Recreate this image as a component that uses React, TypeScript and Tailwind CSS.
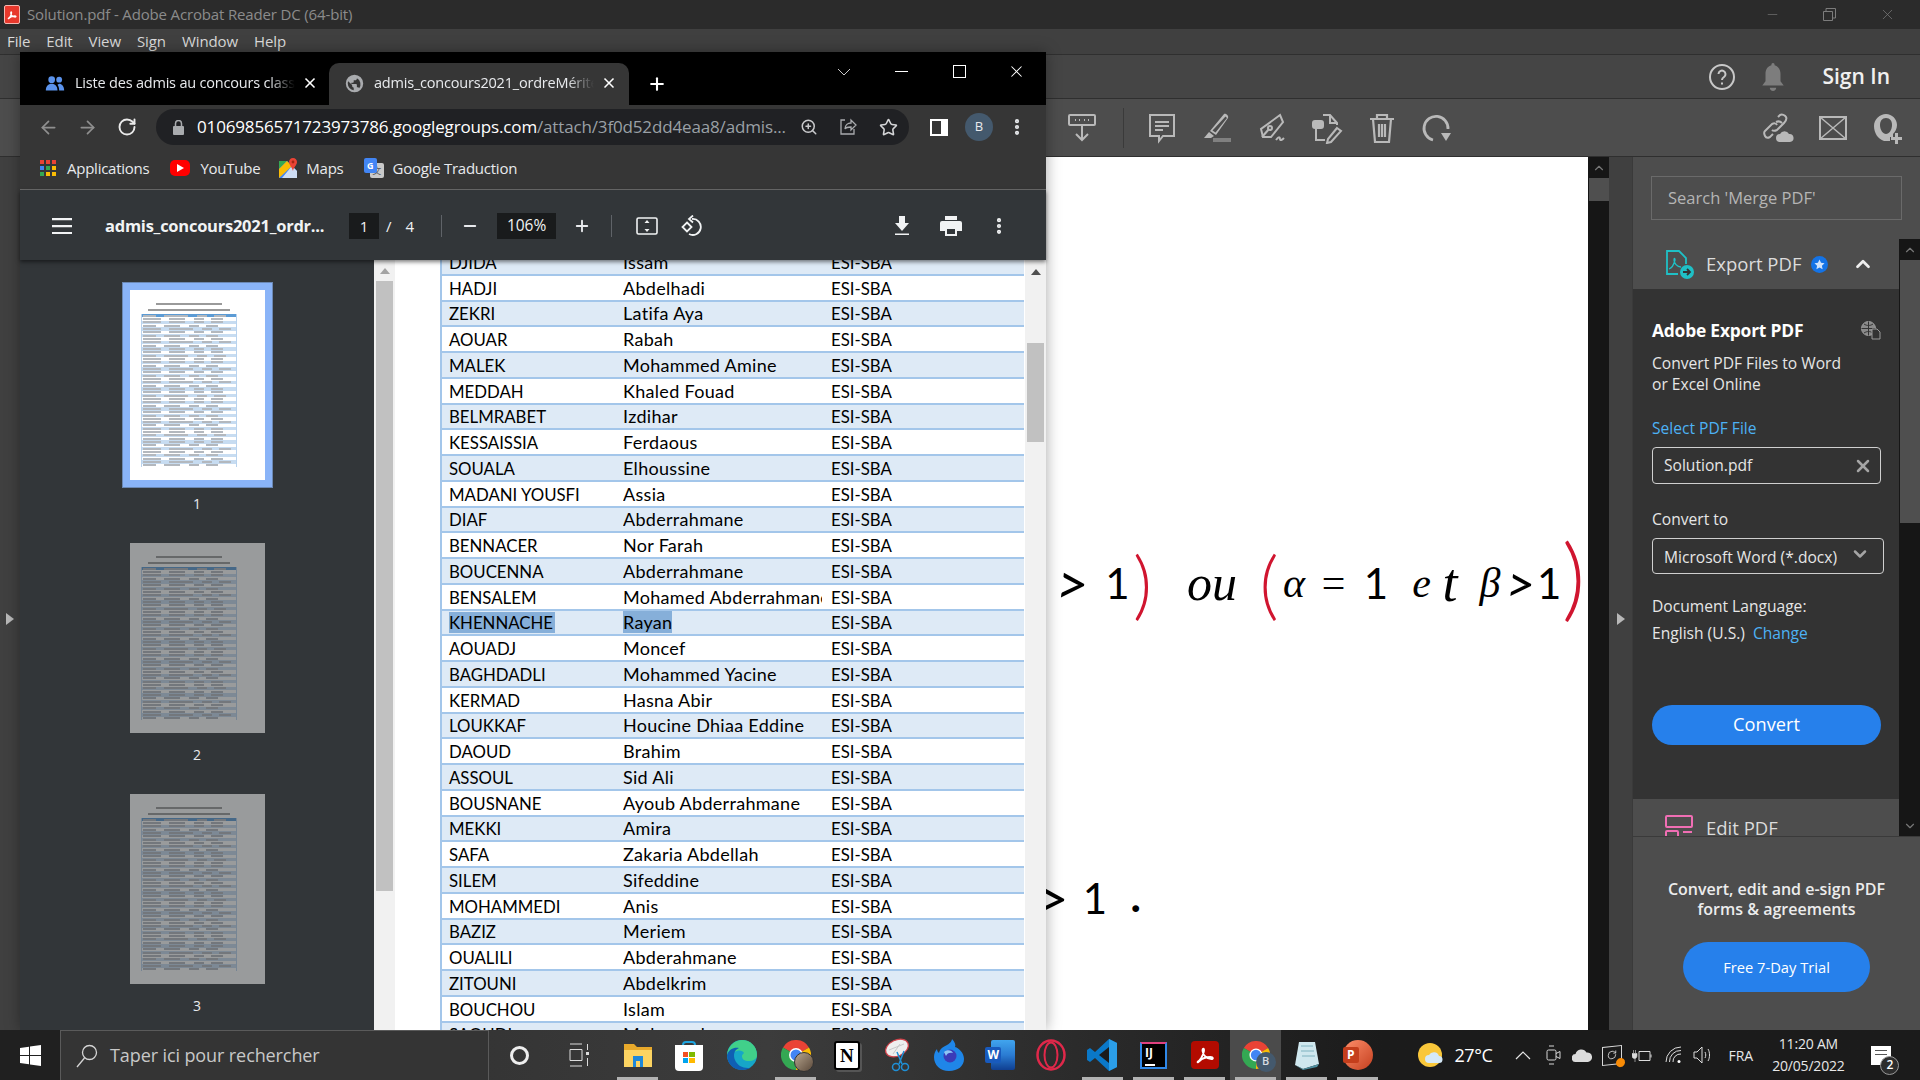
import React from 'react'
import { ArrowLeft, ArrowRight, ChevronDown, ChevronUp, Minus, MoreVertical, Plus, RotateCw, Star, X, ZoomIn } from 'lucide-react'

const rows: [string, string][] = [
    ['DJIDA', 'Issam'], ['HADJI', 'Abdelhadi'], ['ZEKRI', 'Latifa Aya'], ['AOUAR', 'Rabah'], ['MALEK', 'Mohammed Amine'],
    ['MEDDAH', 'Khaled Fouad'], ['BELMRABET', 'Izdihar'], ['KESSAISSIA', 'Ferdaous'], ['SOUALA', 'Elhoussine'],
    ['MADANI YOUSFI', 'Assia'], ['DIAF', 'Abderrahmane'], ['BENNACER', 'Nor Farah'], ['BOUCENNA', 'Abderrahmane'],
    ['BENSALEM', 'Mohamed Abderrahmane'], ['KHENNACHE', 'Rayan'], ['AOUADJ', 'Moncef'], ['BAGHDADLI', 'Mohammed Yacine'],
    ['KERMAD', 'Hasna Abir'], ['LOUKKAF', 'Houcine Dhiaa Eddine'], ['DAOUD', 'Brahim'], ['ASSOUL', 'Sid Ali'],
    ['BOUSNANE', 'Ayoub Abderrahmane'], ['MEKKI', 'Amira'], ['SAFA', 'Zakaria Abdellah'], ['SILEM', 'Sifeddine'],
    ['MOHAMMEDI', 'Anis'], ['BAZIZ', 'Meriem'], ['OUALILI', 'Abderahmane'], ['ZITOUNI', 'Abdelkrim'], ['BOUCHOU', 'Islam'],
    ['SAOUDI', 'Mohamed'], ['HAMDI', 'Imane'],
]

const thumbRows = Array.from({ length: 46 }, (_, i) => i)

const Thumb = ({ dim }: { dim?: boolean }) => (
    <div className={`w-[135px] h-[190px] bg-white flex flex-col items-start pt-[13px] ${dim ? 'opacity-50' : ''}`}>
        <div className="ml-[26px] w-[66px] h-[2px] bg-[#9a9a9a]" />
        <div className="ml-[18px] w-[82px] h-[2px] bg-[#9a9a9a] mt-[4px]" />
        <div className="ml-[11px] w-[96px] mt-[3px] bg-[#b9d3ee] px-[1px] flex flex-col">
            {thumbRows.map((i) => (
                <div key={i} className={`h-[3.33px] flex items-center gap-[3px] px-[1px] ${i === 0 ? 'bg-[#5b9bd5]' : i % 2 ? 'bg-white' : 'bg-[#c7dcf1]'}`}>
                    <div className={`h-[2px] ${i % 3 === 0 ? 'w-[13px]' : 'w-[18px]'} bg-[#b3b8be] mr-[5px]`} />
                    <div className={`h-[2px] ${i % 4 === 0 ? 'w-[24px]' : 'w-[16px]'} bg-[#b3b8be] mr-[6px]`} />
                    <div className="h-[2px] w-[10px] bg-[#b3b8be] mr-[4px]" />
                    <div className="h-[2px] w-[12px] bg-[#b3b8be]" />
                </div>
            ))}
        </div>
    </div>
)

const ChromeLogo = ({ size = 24 }: { size?: number }) => (
    <svg width={size} height={size} viewBox="0 0 24 24">
        <path d="M12 12 1.6 6A12 12 0 0 1 22.4 6Z" fill="#ea4335" />
        <path d="M12 12 22.4 6A12 12 0 0 1 12 24Z" fill="#fbbc04" />
        <path d="M12 12 12 24A12 12 0 0 1 1.6 6Z" fill="#34a853" />
        <circle cx="12" cy="12" r="5.6" fill="#fff" />
        <circle cx="12" cy="12" r="4.4" fill="#4285f4" />
    </svg>
)

const AcrobatGlyph = ({ color = '#fff' }: { color?: string }) => (
    <svg width="24" height="24" viewBox="0 0 24 24" fill="none" stroke={color} strokeWidth="1.8">
        <path d="M4 19c3-1 6-6 7-11 .4-3-1.5-3-1.500 0 .5 4 4 8 9 8 2 0 2-2-1-2-4 0-9 2-11 4-1 1-2 2-2 1Z" />
    </svg>
)

const TaskSlot = ({ children, active, run }: { children: React.ReactNode; active?: boolean; run?: boolean }) => (
    <div className={`relative w-[51.1px] h-[50px] flex items-center justify-center shrink-0 ${active ? 'bg-[#4b4b4b]' : ''}`}>
        {children}
        {run && <div className="absolute bottom-0 left-[5px] right-[5px] h-[3px] bg-[#b2b2b2]" />}
    </div>
)

const ToolSlot = ({ children }: { children: React.ReactNode }) => (
    <div className="w-[55px] h-[36px] flex items-center justify-center">{children}</div>
)

const tool = { width: 32, height: 32, viewBox: '0 0 32 32', fill: 'none', stroke: '#b9b9b9', strokeWidth: 2 }

export default function App() {
    return (
        <div className="relative w-[1920px] h-[1080px] overflow-hidden flex flex-col bg-[#404040] font-['Open_Sans',sans-serif]">
            {/* acrobat title bar */}
            <div className="h-[29px] bg-[#2b2b2b] flex items-center pl-[4px] shrink-0">
                <div className="w-[16px] h-[19px] rounded-[2px] bg-[#e8382c] border border-[#f3b7b0] flex items-center justify-center overflow-hidden">
                    <svg width="12" height="12" viewBox="0 0 24 24" fill="none" stroke="#fff" strokeWidth="2.600">
                        <path d="M4 19c3-1 6-6 7-11 .4-3-1.500-3-1.500 0 .5 4 4 8 9 8 2 0 2-2-1-2-4 0-9 2-11 4-1 1-2 2-2 1Z" />
                    </svg>
                </div>
                <span className="ml-[7px] text-[15px] text-[#8b8b8b] tracking-[-0.15px]">Solution.pdf - Adobe Acrobat Reader DC (64-bit)</span>
                <div className="ml-auto flex items-center text-[#7c7c7c]">
                    <Minus size={15} strokeWidth={1} className="mr-[43px]" />
                    <svg width="13" height="13" viewBox="0 0 13 13" fill="none" stroke="#7c7c7c" className="mr-[43px]"><path d="M.5 3.500h9v9h-9zM3 3V.5h9.500V10H10" /></svg>
                    <X size={17} strokeWidth={1} className="mr-[24px]" />
                </div>
            </div>
            {/* menu */}
            <div className="h-[25px] bg-[#404040] flex items-center pl-[7px] text-[15px] text-[#dcdcdc] shrink-0 gap-[16px] tracking-[-0.1px]">
                <span>File</span><span>Edit</span><span>View</span><span>Sign</span><span>Window</span><span>Help</span>
            </div>
            {/* account row */}
            <div className="h-[45px] bg-[#454545] border-t border-t-[#2f2f2f] border-b border-b-[#2f2f2f] flex items-center justify-end shrink-0">
                <svg width="28" height="28" viewBox="0 0 28 28" fill="none" stroke="#c8c8c8" strokeWidth="2"><circle cx="14" cy="14" r="12" /><path d="M10.500 11a3.500 3.500 0 1 1 5.500 3c-1.500 1-2 1.500-2 3" /><path d="M14 19.500v2" /></svg>
                <svg width="26" height="30" viewBox="0 0 24 28" fill="#7d7d7d" className="ml-[24px]"><path d="M12 1c1 0 1.500.8 1.500 2C17 4 19 7 19 11v7l3 4H2l3-4v-7c0-4 2-7 5.500-8C10.500 1.800 11 1 12 1ZM9 24h6c0 1.500-1.300 3-3 3s-3-1.500-3-3Z" /></svg>
                <span className="ml-[36px] mr-[30px] text-[21px] font-semibold text-[#f0f0f0]">Sign In</span>
            </div>
            {/* tools row */}
            <div className="h-[58px] bg-[#4d4d4d] border-b border-b-[#2f2f2f] flex items-center pl-[1054px] pr-[5px] shrink-0">
                <ToolSlot>
                    <svg {...tool}><rect x="3" y="3" width="26" height="10" rx="1" /><path d="M9 8h1M13 8h1M18 8h1M22 8h1M16 13v15M10 22l6 6 6-6" /></svg>
                </ToolSlot>
                <div className="w-px h-[40px] bg-[#3a3a3a] ml-[14px] mr-[10px]" />
                <ToolSlot>
                    <svg {...tool}><path d="M4 3h24v21H17l-4 5v-5H4Z" /><path d="M9 10h14M9 14h14M9 18h8" /></svg>
                </ToolSlot>
                <ToolSlot>
                    <svg {...tool} fill="#b9b9b9" strokeWidth="0"><path d="M23 2c2-1 5 2 4 4L15 23l-6-4ZM24.500 4.500 11.500 18.500l3 2L26 6Z" fillRule="evenodd" /><path d="M8 20l5 4-3 2H3Z" /><rect x="12" y="26" width="18" height="4" fill="#808080" /></svg>
                </ToolSlot>
                <ToolSlot>
                    <svg {...tool}><path d="M24 3 27 10 15 25H7L5 17Z" /><path d="M6 25l7-8" /><circle cx="14" cy="16" r="2" /><path d="M20 28c3-4 4-3 4-1s2 1 4-1" /></svg>
                </ToolSlot>
                <ToolSlot>
                    <svg {...tool}><path d="M12 3h7l7 8v2" /><path d="M19 3v8h7" /><rect x="2" y="9" width="10" height="7" rx="2" fill="#b9b9b9" /><path d="M5 16v12h9" /><path d="M26 16l4 3-10 11-4 1 1-4Z" /></svg>
                </ToolSlot>
                <ToolSlot>
                    <svg {...tool} strokeWidth="2.200"><path d="M4 7h24M11 7V3h10v4M7 7l2 23h14l2-23M13 12v13M16 12v13M19 12v13" /></svg>
                </ToolSlot>
                <ToolSlot>
                    <svg {...tool} strokeWidth="2.800"><path d="M12 28A12 12 0 1 1 27 17" /><path d="M20 21h10l-5 8Z" fill="#b9b9b9" strokeWidth="0" /></svg>
                </ToolSlot>
                <div className="ml-auto flex">
                    <ToolSlot>
                        <svg {...tool}><path d="M16 5l2-2c2-1 5 0 6 2s0 4-2 6l-7 7c-2 1-4 1-5 0M14 10c2-1 4-1 6 1M11 22l-3 3c-2 1-4 1-5-1s-1-4 0-5l7-7c2-1 4-1 5 1" /><path d="M18 30a4 4 0 0 1 0-8 5 5 0 0 1 9 0 4 4 0 0 1 1 8Z" fill="#b9b9b9" strokeWidth="0" /></svg>
                    </ToolSlot>
                    <ToolSlot>
                        <svg {...tool}><rect x="3" y="5" width="26" height="22" /><path d="M3 5l26 22M29 5 3 27" strokeWidth="1.500" /></svg>
                    </ToolSlot>
                    <ToolSlot>
                        <svg {...tool} fill="#b9b9b9" strokeWidth="0"><path d="M14 2c6 0 11 5 11 11 0 4-2 7-4 9v3h-3v4h-6c-6-2-10-8-10-15C2 7 8 2 14 2Z" /><path d="M14 6c-4 0-6 3-6 7 0 5 3 9 6 9s6-4 6-9c0-4-2-7-6-7Z" fill="#4d4d4d" /><path d="M23 21h3v4h4v3h-4v4h-3v-4h-4v-3h4Z" /></svg>
                    </ToolSlot>
                </div>
            </div>

            {/* acrobat body */}
            <div className="flex-1 flex min-h-0">
                <div className="w-[20px] bg-[#404040] flex items-center justify-center shrink-0">
                    <svg width="8" height="12" viewBox="0 0 8 12" fill="#b8b8b8"><path d="M0 0l8 6-8 6Z" /></svg>
                </div>
                {/* scanned page */}
                <div className="w-[1568px] bg-white flex flex-col shrink-0 overflow-hidden text-black font-['Liberation_Serif',serif] italic">
                    <div className="flex items-center h-[100px] mt-[376px] pl-[1036px] text-[42px] leading-none">
                        <span className="w-[30px] text-center text-[56px] font-['Lato',sans-serif]">&gt;</span>
                        <span className="w-[31px] ml-[16px] text-center not-italic font-['Lato',sans-serif]">1</span>
                        <span className="w-[14px] text-center text-[74px] text-[#d0152f] font-['Lato',sans-serif] font-light not-italic">)</span>
                        <span className="w-[50px] ml-[40px] text-center text-[50px]">ou</span>
                        <span className="w-[24px] ml-[20px] text-center text-[74px] text-[#d0152f] font-['Lato',sans-serif] font-light not-italic">(</span>
                        <span className="w-[26px] text-center">α</span>
                        <span className="w-[19px] ml-[12px] text-center">=</span>
                        <span className="w-[30px] ml-[23px] text-center not-italic font-['Lato',sans-serif]">1</span>
                        <span className="w-[19px] ml-[21px] text-center">e</span>
                        <span className="w-[38px] text-center text-[54px]">t</span>
                        <span className="w-[22px] ml-[10px] text-center">β</span>
                        <span className="w-[25px] ml-[5px] text-center text-[50px] font-['Lato',sans-serif]">&gt;</span>
                        <span className="w-[23px] ml-[6px] text-center not-italic font-['Lato',sans-serif]">1</span>
                        <span className="w-[20px] ml-[2px] text-center text-[90px] text-[#d0152f] -mt-[16px] font-['Lato',sans-serif] font-light not-italic">)</span>
                    </div>
                    <div className="flex items-center h-[50px] mt-[240px] pl-[1016px] text-[42px] leading-none">
                        <span className="w-[31px] text-right text-[56px] font-['Lato',sans-serif]">&gt;</span>
                        <span className="w-[26px] ml-[15px] text-center not-italic font-['Lato',sans-serif]">1</span>
                        <span className="w-[10px] ml-[24px] text-center font-bold">.</span>
                    </div>
                </div>
                {/* document scrollbar */}
                <div className="w-[21px] bg-[#161616] flex flex-col items-center shrink-0">
                    <ChevronUp size={14} className="text-[#777] mt-[4px] mb-[3px]" />
                    <div className="w-[20px] h-[23px] bg-[#4f4f4f]" />
                    <ChevronDown size={14} className="text-[#777] mt-auto mb-[3px]" />
                </div>
                <div className="w-[23px] bg-[#404040] flex items-center justify-center shrink-0">
                    <svg width="8" height="12" viewBox="0 0 8 12" fill="#b8b8b8"><path d="M0 0l8 6-8 6Z" /></svg>
                </div>
                {/* tools pane */}
                <div className="w-[288px] flex flex-col bg-[#4d4d4d] border-l border-l-[#3a3a3a] shrink-0">
                    <div className="h-[82px] shrink-0 pt-[19px] pl-[18px]">
                        <div className="w-[251px] h-[44px] border border-[#6a6a6a] flex items-center pl-[16px] text-[16.500px] text-[#b5b5b5]">Search 'Merge PDF'</div>
                    </div>
                    <div className="h-[597px] flex shrink-0">
                        <div className="w-[267px] flex flex-col overflow-hidden">
                            <div className="h-[50px] shrink-0 flex items-center pl-[33px] bg-[#4d4d4d]">
                                <svg width="28" height="29" viewBox="0 0 28 29" fill="none" stroke="#1fc0c6" strokeWidth="1.800" className="shrink-0">
                                    <path d="M12 24H1V1h12l7 7v6" /><path d="M3 19c3-1 5-5 6-9 0-2-1-2-1 0 0 3 3 7 7 7" strokeWidth="1.300" />
                                    <circle cx="21" cy="22" r="7" fill="#1fc0c6" stroke="none" /><path d="M17 22h7M21 19l3 3-3 3" stroke="#333" />
                                </svg>
                                <span className="ml-[12px] text-[18.500px] text-[#dcdcdc] whitespace-nowrap">Export PDF</span>
                                <div className="ml-[10px] w-[17px] h-[17px] rounded-full bg-[#1473e6] flex items-center justify-center shrink-0">
                                    <svg width="11" height="11" viewBox="0 0 24 24" fill="#cfe2fb"><path d="M12 1l3.400 7.300 7.600.9-5.700 5.400 1.500 7.900L12 18.700l-6.800 3.800 1.500-7.900L1 9.200l7.600-.9Z" /></svg>
                                </div>
                                <ChevronUp size={22} strokeWidth={3} className="ml-[24px] text-[#eee] shrink-0" />
                            </div>
                            <div className="h-[510px] shrink-0 bg-[#333333] px-[19px] text-[#e6e6e6] text-[15.600px] flex flex-col">
                                <div className="h-[22px] mt-[30px] flex items-center justify-between w-[229px] shrink-0">
                                    <span className="text-[17.400px] font-bold text-white tracking-[-0.2px] whitespace-nowrap">Adobe Export PDF</span>
                                    <svg width="20" height="19" viewBox="0 0 20 19" fill="none" stroke="#9a9a9a" className="shrink-0"><circle cx="7.500" cy="7.500" r="7" fill="#8a8a8a" /><path d="M.5 7.500h14M7.500.5v14M3 3c3 2 6 2 9 0M3 12c3-2 6-2 9 0" stroke="#333" /><path d="M11 8h5l3 3v7h-8Z" fill="#333" /></svg>
                                </div>
                                <div className="mt-[12px] leading-[21px] shrink-0 whitespace-nowrap">Convert PDF Files to Word<br />or Excel Online</div>
                                <div className="mt-[22px] h-[22px] leading-[22px] text-[#4db2f5] shrink-0">Select PDF File</div>
                                <div className="mt-[8px] h-[37px] w-[229px] border border-[#cfcfcf] rounded-[4px] flex items-center justify-between pl-[11px] pr-[7px] shrink-0">
                                    <span>Solution.pdf</span>
                                    <X size={20} strokeWidth={3} className="text-[#a5a5a5]" />
                                </div>
                                <div className="mt-[24px] h-[22px] leading-[22px] shrink-0">Convert to</div>
                                <div className="mt-[8px] h-[36px] w-[232px] border border-[#cfcfcf] rounded-[4px] flex items-center justify-between pl-[11px] pr-[13px] shrink-0">
                                    <span className="whitespace-nowrap pt-[3px]">Microsoft Word (*.docx)</span>
                                    <ChevronDown size={20} strokeWidth={3} className="text-[#a5a5a5] -mt-[4px] shrink-0" />
                                </div>
                                <div className="mt-[21px] h-[22px] leading-[22px] shrink-0">Document Language:</div>
                                <div className="mt-[5px] h-[22px] leading-[22px] shrink-0 whitespace-nowrap">English (U.S.) <span className="ml-[4px] text-[#4db2f5]">Change</span></div>
                                <div className="mt-[61px] h-[40px] w-[229px] rounded-full bg-[#2680eb] flex items-center justify-center text-[18.200px] text-white shrink-0">Convert</div>
                            </div>
                            <div className="h-[37px] shrink-0 flex pl-[32px] pt-[16px] bg-[#4d4d4d]">
                                <svg width="28" height="28" viewBox="0 0 28 28" fill="none" stroke="#f06eb4" strokeWidth="2" className="shrink-0"><rect x="1" y="1" width="26" height="11" rx="1" /><rect x="1" y="16" width="12" height="11" rx="1" /><path d="M18 17h9M18 22h9" /></svg>
                                <span className="ml-[13px] text-[18.500px] text-[#dcdcdc] leading-[26px]">Edit PDF</span>
                            </div>
                        </div>
                        <div className="w-[21px] bg-[#161616] flex flex-col items-center">
                            <ChevronUp size={14} className="text-[#777] mt-[4px] mb-[3px]" />
                            <div className="w-[20px] h-[263px] bg-[#4f4f4f]" />
                            <ChevronDown size={14} className="text-[#777] mt-auto mb-[3px]" />
                        </div>
                    </div>
                    <div className="flex-1 border-t border-t-[#3a3a3a] flex flex-col items-center text-center">
                        <div className="mt-[42px] text-[16px] leading-[20px] font-semibold text-[#ececec] w-[267px] whitespace-nowrap">Convert, edit and e-sign PDF<br />forms &amp; agreements</div>
                        <div className="mt-[23px] w-[187px] h-[50px] rounded-full bg-[#2680eb] flex items-center justify-center text-[14.700px] text-white">Free 7-Day Trial</div>
                    </div>
                </div>
            </div>

            {/* browser window, floats over the reader */}
            <div className="absolute left-[20px] top-[52px] w-[1026px] h-[978px] flex flex-col bg-[#323639] shadow-[0_0_14px_rgba(0,0,0,0.35)]">
                <div className="h-[53px] bg-black flex items-end shrink-0 relative">
                    <div className="w-[309px] h-[42px] flex items-center pl-[25px] pb-[2px] text-[14.500px] text-[#e8eaed]">
                        <svg width="20" height="20" viewBox="0 0 24 24" fill="#5b93ec" className="shrink-0"><circle cx="8" cy="8" r="4" /><circle cx="17" cy="8" r="3.500" /><path d="M1 21c0-5 3-8 7-8s7 3 7 8ZM17 13c3 0 6 3 6 8h-6c0-3-1-6-2-7Z" /></svg>
                        <span className="ml-[10px] w-[220px] overflow-hidden whitespace-nowrap tracking-[-0.2px] [mask-image:linear-gradient(to_right,black_88%,transparent)]">Liste des admis au concours classés</span>
                        <X size={16} strokeWidth={2.500} className="ml-[7px] text-white shrink-0" />
                    </div>
                    <div className="w-[300px] h-[42px] bg-[#363636] rounded-t-[10px] flex items-center pl-[16px] pb-[2px] text-[14.500px] text-[#e8eaed]">
                        <svg width="19" height="19" viewBox="0 0 24 24" fill="#a9abae" className="shrink-0"><path fillRule="evenodd" d="M12 1a11 11 0 1 0 0 22 11 11 0 0 0 0-22ZM3.500 12c0-1 .2-2 .5-2.800L9 14v1c0 1 1 2 2 2v3.400A8.500 8.500 0 0 1 3.500 12Zm14.400 6c-.3-.8-1-1.400-1.900-1.400h-1v-3c0-.5-.5-1-1-1H8V11h2c.5 0 1-.5 1-1V8h2c1 0 2-1 2-2v-.6a8.500 8.500 0 0 1 2.900 12.600Z" /></svg>
                        <span className="ml-[10px] w-[220px] overflow-hidden whitespace-nowrap tracking-[-0.2px] [mask-image:linear-gradient(to_right,black_88%,transparent)]">admis_concours2021_ordreMérite.pdf</span>
                        <X size={16} strokeWidth={2.500} className="ml-[7px] text-white shrink-0" />
                    </div>
                    <Plus size={20} strokeWidth={2.500} className="ml-[18px] mb-[11px] text-white" />
                    <svg width="14" height="8" viewBox="0 0 14 8" fill="none" stroke="#c9c9c9" className="absolute left-[817px] top-[16px]"><path d="M1 1l6 6 6-6" /></svg>
                    <div className="absolute left-[875px] top-[19px] w-[13px] h-px bg-white" />
                    <div className="absolute left-[933px] top-[13px] w-[13px] h-[13px] border border-white" />
                    <X size={19} strokeWidth={1.300} className="absolute left-[987px] top-[10px] text-white" />
                </div>
                <div className="h-[44px] bg-[#363636] flex items-center shrink-0">
                    <ArrowLeft size={21} className="ml-[18px] text-[#8f8f8f] shrink-0" />
                    <ArrowRight size={21} className="ml-[18px] text-[#8f8f8f] shrink-0" />
                    <RotateCw size={20} strokeWidth={2.300} className="ml-[19px] text-[#eaeaea] shrink-0" />
                    <div className="ml-[19px] w-[753px] h-[36px] rounded-full bg-[#202124] flex items-center pl-[17px] text-[17px] tracking-[-0.15px] shrink-0">
                        <svg width="11" height="15" viewBox="0 0 11 15" fill="#a9abae" className="shrink-0"><path d="M1 6h9a1 1 0 0 1 1 1v7a1 1 0 0 1-1 1H1a1 1 0 0 1-1-1V7a1 1 0 0 1 1-1Z" /><path d="M2.500 6V3.500a3 3 0 0 1 6 0V6" fill="none" stroke="#a9abae" strokeWidth="1.500" /></svg>
                        <span className="ml-[13px] w-[590px] whitespace-nowrap overflow-hidden text-white">01069856571723973786.googlegroups.com<span className="text-[#9aa0a6]">/attach/3f0d52dd4eaa8/admis...</span></span>
                        <ZoomIn size={18} className="ml-[13px] text-[#c9cacc] shrink-0" />
                        <svg width="18" height="18" viewBox="0 0 18 18" fill="none" stroke="#a9abae" strokeWidth="1.300" className="ml-[21px] shrink-0"><path d="M6 2H2v14h13v-5" /><path d="M6 11c0-4 3-6 6-6V2l5 5-5 5V9c-3 0-5 0-6 2Z" /></svg>
                        <Star size={19} strokeWidth={2} className="ml-[22px] text-[#d4d5d7] shrink-0" />
                    </div>
                    <div className="ml-[21px] w-[18px] h-[17px] bg-white flex shrink-0"><div className="ml-[2px] my-[2px] w-[9px] bg-[#363636]" /></div>
                    <div className="ml-[17px] w-[28px] h-[28px] rounded-full bg-[#44596d] text-[#e8eaed] text-[13px] flex items-center justify-center shrink-0">B</div>
                    <MoreVertical size={20} strokeWidth={3} className="ml-[14px] text-[#e8eaed] shrink-0" />
                </div>
                <div className="h-[41px] bg-[#363636] border-b border-b-[#6b6b6b] flex items-center pb-[2px] text-[15px] text-[#e8eaed] tracking-[-0.25px] shrink-0">
                    <div className="ml-[20px] grid grid-cols-3 gap-[2px] w-[16px] shrink-0">
                        {['bg-[#ea4335]', 'bg-[#ea4335]', 'bg-[#ea4335]', 'bg-[#4285f4]', 'bg-[#34a853]', 'bg-[#fbbc04]', 'bg-[#34a853]', 'bg-[#fbbc04]', 'bg-[#fbbc04]'].map((c, i) => (
                            <div key={i} className={`h-[4px] ${c}`} />
                        ))}
                    </div>
                    <span className="ml-[11px]">Applications</span>
                    <div className="ml-[21px] w-[20px] h-[16px] rounded-[5px] bg-[#f00] flex items-center justify-center shrink-0">
                        <svg width="8" height="8" viewBox="0 0 8 8" fill="#fff"><path d="M1 0l7 4-7 4Z" /></svg>
                    </div>
                    <span className="ml-[10px]">YouTube</span>
                    <svg width="18" height="20" viewBox="0 0 18 20" className="ml-[19px] shrink-0">
                        <path d="M0 3h8l10 10v7H0Z" fill="#4285f4" /><path d="M0 3h8L0 11Z" fill="#34a853" /><path d="M0 11 8 3l5 5-13 12Z" fill="#fbbc04" /><path d="M13 8l5 5v7H3Z" fill="#f1f3f4" opacity=".8" />
                        <path d="M14 0c2.500 0 4 2 4 4 0 3-4 6-4 9-.5-3-4-6-4-9 0-2 1.500-4 4-4Z" fill="#ea4335" /><circle cx="14" cy="4" r="1.400" fill="#a52714" />
                    </svg>
                    <span className="ml-[9px]">Maps</span>
                    <div className="ml-[20px] relative w-[20px] h-[20px] shrink-0">
                        <div className="absolute left-[6px] top-[5px] w-[14px] h-[15px] rounded-[2px] bg-[#c9c9c9] text-[#555] text-[9px] leading-[15px] text-center font-['Noto_Sans_CJK_SC',sans-serif]">文</div>
                        <div className="absolute left-0 top-0 w-[13px] h-[15px] rounded-[2px] bg-[#4285f4] text-white text-[9px] font-bold leading-[15px] text-center">G</div>
                    </div>
                    <span className="ml-[9px]">Google Traduction</span>
                </div>
                <div className="h-[70px] bg-[#323639] flex items-center pt-[2px] shadow-[0_2px_4px_rgba(0,0,0,0.5)] relative z-10 shrink-0">
                    <svg width="20" height="16" viewBox="0 0 20 16" fill="#f1f3f4" className="ml-[32px] shrink-0"><path d="M0 0h20v2.200H0zM0 7h20v2.200H0zM0 14h20v2.200H0z" /></svg>
                    <span className="ml-[33px] w-[239px] text-[16.500px] font-bold text-[#f1f3f4] tracking-[-0.25px] whitespace-nowrap shrink-0">admis_concours2021_ordr...</span>
                    <div className="ml-[5px] w-[30px] h-[26px] bg-[#191b1c] text-[#f1f3f4] text-[15px] flex items-center justify-center shrink-0">1</div>
                    <span className="ml-[7px] text-[15px] text-[#f1f3f4]">/</span>
                    <span className="ml-[14px] text-[15px] text-[#f1f3f4]">4</span>
                    <div className="ml-[27px] w-px h-[22px] bg-[#5f6368]" />
                    <Minus size={18} strokeWidth={2.500} className="ml-[19px] text-[#e8eaed]" />
                    <div className="ml-[18px] w-[59px] h-[26px] bg-[#191b1c] text-[#f1f3f4] text-[15.500px] flex items-center justify-center">106%</div>
                    <Plus size={18} strokeWidth={2.500} className="ml-[17px] text-[#e8eaed]" />
                    <div className="ml-[20px] w-px h-[22px] bg-[#5f6368]" />
                    <svg width="22" height="18" viewBox="0 0 22 18" fill="none" stroke="#f1f3f4" strokeWidth="1.600" className="ml-[24px]"><rect x="1" y="1" width="20" height="16" rx="1.500" /><path d="M11 3l2.500 3h-5ZM11 15l2.500-3h-5Z" fill="#f1f3f4" stroke="none" /></svg>
                    <svg width="22" height="22" viewBox="0 0 22 22" fill="none" stroke="#f1f3f4" strokeWidth="1.800" className="ml-[22px]"><path d="M12 4a8 8 0 1 1-3 15" /><path d="M13 .5 9 4l4 3.500" /><path d="M7 7.500l4.500 4.500L7 16.500 2.500 12Z" /></svg>
                    <svg width="16" height="20" viewBox="0 0 16 20" fill="#f1f3f4" className="ml-[192px]"><path d="M5 0h6v7h4l-7 8-7-8h4ZM1 17.500h14V19H1Z" /></svg>
                    <svg width="22" height="20" viewBox="0 0 22 20" fill="#f1f3f4" className="ml-[30px]"><path d="M5 0h12v4H5ZM2 5h18a2 2 0 0 1 2 2v8h-5v5H5v-5H0V7a2 2 0 0 1 2-2Zm5 8v5h8v-5Z" fillRule="evenodd" /></svg>
                    <MoreVertical size={20} strokeWidth={3} className="ml-[27px] text-[#f1f3f4]" />
                </div>
                <div className="flex-1 flex min-h-0">
                    {/* thumbnails */}
                    <div className="w-[354px] bg-[#323639] flex flex-col items-center shrink-0 overflow-hidden">
                        <div className="mt-[22px] border border-[#6b88b4]">
                            <div className="border-[7px] border-[#8ab4f8]"><Thumb /></div>
                        </div>
                        <div className="mt-[5px] h-[24px] text-[14px] text-[#e8eaed]">1</div>
                        <div className="mt-[26px]"><Thumb dim /></div>
                        <div className="mt-[11px] h-[24px] text-[14px] text-[#e8eaed]">2</div>
                        <div className="mt-[26px]"><Thumb dim /></div>
                        <div className="mt-[11px] h-[24px] text-[14px] text-[#e8eaed]">3</div>
                    </div>
                    {/* viewer */}
                    <div className="w-[21px] bg-[#f1f1f1] flex flex-col items-center shrink-0">
                        <svg width="10" height="6" viewBox="0 0 10 6" fill="#a3a3a3" className="mt-[8px] mb-[7px]"><path d="M5 0l5 6H0Z" /></svg>
                        <div className="w-[17px] h-[610px] bg-[#c1c1c1]" />
                    </div>
                    <div className="flex-1 bg-white overflow-hidden pl-[45px] min-w-0">
                        <div className="-mt-[10px] w-[584px] border-l-2 border-l-[#a3c6ea] font-['Lato',sans-serif] text-[16.800px] text-black">
                            {rows.map(([name, first], i) => (
                                <div key={name} className={`h-[25.75px] border-b-[2.500px] border-b-[#a3c6ea] flex items-center pl-[7px] pt-[1px] ${i % 2 ? 'bg-white' : 'bg-[#deeaf6]'}`}>
                                    <div className="w-[174px] whitespace-nowrap"><span className={name === 'KHENNACHE' ? 'bg-[#86afd9] pr-[2px]' : ''}>{name}</span></div>
                                    <div className="w-[199px] mr-[9px] overflow-hidden whitespace-nowrap text-[18px] tracking-[0.3px]"><span className={first === 'Rayan' ? 'bg-[#86afd9]' : ''}>{first}</span></div>
                                    <div>ESI-SBA</div>
                                </div>
                            ))}
                        </div>
                    </div>
                    <div className="w-[21px] bg-[#f1f1f1] flex flex-col items-center shrink-0">
                        <svg width="10" height="6" viewBox="0 0 10 6" fill="#505050" className="mt-[9px] mb-[68px]"><path d="M5 0l5 6H0Z" /></svg>
                        <div className="w-[17px] h-[99px] bg-[#c1c1c1]" />
                    </div>
                </div>
            </div>

            {/* windows taskbar */}
            <div className="absolute left-0 bottom-0 w-[1920px] h-[50px] flex items-center bg-gradient-to-r from-[#2a2a2a] from-[3%] via-[#3c3c3c] via-[40%] to-[#1b1b1b] to-[72%] text-white">
                <div className="w-[60px] h-[50px] bg-[#202020] flex items-center justify-center shrink-0">
                    <svg width="21" height="21" viewBox="0 0 21 21" fill="#fff"><path d="M0 3l9-1.300V10H0ZM10 1.500 21 0v10H10ZM0 11h9v8.300L0 18ZM10 11h11v10l-11-1.500Z" /></svg>
                </div>
                <div className="w-[429px] h-[50px] bg-[#343434] border-t border-x border-[#5a5a5a] flex items-center pl-[15px] text-[18px] text-[#c8c8c8] shrink-0">
                    <svg width="22" height="24" viewBox="0 0 22 24" fill="none" stroke="#d5d5d5" strokeWidth="1.300"><circle cx="13.500" cy="8.500" r="7" /><path d="M8.500 14 1 23" /></svg>
                    <span className="ml-[12px] tracking-[-0.1px]">Taper ici pour rechercher</span>
                </div>
                <div className="w-[60px] flex items-center justify-center shrink-0">
                    <div className="w-[19px] h-[19px] rounded-full border-[3px] border-[#eee]" />
                </div>
                <div className="w-[60px] flex items-center justify-center shrink-0">
                    <svg width="20" height="24" viewBox="0 0 20 24" fill="none" stroke="#dcdcdc"><path d="M1 1h12M1 23h12M1 6.500h12v11H1ZM18.500 1v6M18.500 15v8" /><rect x="17" y="9" width="3" height="3" fill="#dcdcdc" stroke="none" /></svg>
                </div>
                <div className="w-[3px] shrink-0" />
                <TaskSlot run>
                    <svg width="28" height="26" viewBox="0 0 28 26"><path d="M0 2h10l3 3h15v20H0Z" fill="#e8a92b" /><path d="M0 8h28v17H0Z" fill="#fcd462" /><path d="M9 14h10v11h-3v-6h-4v6H9Z" fill="#1e88d9" /></svg>
                </TaskSlot>
                <TaskSlot>
                    <div className="relative w-[28px] h-[30px] mt-[2px]">
                        <div className="absolute left-[7px] top-0 w-[14px] h-[8px] border-2 border-[#1fa5e0] rounded-t-[4px]" />
                        <div className="absolute left-0 top-[4px] w-[28px] h-[26px] bg-white rounded-b-[4px] grid grid-cols-2 gap-px p-[8px] pt-[7px]">
                            <div className="bg-[#f25022]" /><div className="bg-[#7fba00]" /><div className="bg-[#00a4ef]" /><div className="bg-[#ffb900]" />
                        </div>
                    </div>
                </TaskSlot>
                <div className="w-[2px] shrink-0" />
                <TaskSlot>
                    <svg width="30" height="30" viewBox="0 0 30 30"><circle cx="15" cy="15" r="15" fill="#16a6c8" /><path d="M0 15C1 5 9 0 15 0c8 0 15 6 15 15 0 4-4 6-8 6-5 0-7-2-7-5 0-1 1-2 2-3-1-2-4-3-7-2C5 12 2 15 0 15Z" fill="#41d08a" /><path d="M0 15C2 9 7 7 12 8c-5 2-6 7-4 12 2 5 7 8 13 8 2 0 3 0 4-1-3 2-6 3-10 3C7 30 0 24 0 15Z" fill="#0f5fb3" /></svg>
                </TaskSlot>
                <div className="w-[3px] shrink-0" />
                <TaskSlot run>
                    <div className="relative -mt-[1px]">
                        <ChromeLogo size={30} />
                        <div className="absolute -right-[3px] -bottom-[2px] w-[20px] h-[20px] rounded-full bg-gradient-to-br from-[#b8a68f] to-[#5c4b3c] border border-[#333]" />
                    </div>
                </TaskSlot>
                <TaskSlot>
                    <div className="w-[26px] h-[29px] bg-white border-[2px] border-black rounded-[3px] shadow-[2px_2px_0_#555] flex items-center justify-center text-black font-['Liberation_Serif',serif] font-bold text-[19px] leading-none">N</div>
                </TaskSlot>
                <TaskSlot>
                    <svg width="28" height="34" viewBox="0 0 28 34" fill="none"><ellipse cx="13" cy="10" rx="12" ry="8" transform="rotate(-25 13 10)" fill="#efefef" stroke="#d2434b" strokeWidth="1.200" /><path d="M5 12 20 6M9 16l7-10" stroke="#c9c9c9" /><path d="M13 14l5 12M20 13l-5 13" stroke="#1f8fd6" strokeWidth="1.500" /><circle cx="12" cy="29" r="3.500" stroke="#1f8fd6" strokeWidth="1.500" /><circle cx="21" cy="29" r="3.500" stroke="#1f8fd6" strokeWidth="1.500" /></svg>
                </TaskSlot>
                <TaskSlot>
                    <svg width="30" height="32" viewBox="0 0 30 32"><path d="M15 32C6 32 0 26 0 18c0-3 1-6 3-8 0 2 1 3 2 4 1-5 6-7 8-8 4-2 5-5 5-6 3 3 4 6 3 8 4 1 9 6 9 12 0 7-6 12-15 12Z" fill="#1f86e8" /><circle cx="16" cy="17" r="6.500" fill="#3b3bb8" /><path d="M10 13c3-3 8-2 9 1-3-1-6 0-7 3Z" fill="#8dc6f5" /></svg>
                </TaskSlot>
                <TaskSlot>
                    <div className="relative w-[30px] h-[30px]">
                        <div className="absolute left-[6px] top-0 w-[24px] h-[30px] rounded-[2px] bg-gradient-to-b from-[#41a5ee] via-[#2b7cd3] to-[#103f91]" />
                        <div className="absolute left-0 top-[7px] w-[16px] h-[16px] rounded-[2px] bg-[#185abd] text-white text-[12px] font-bold leading-[16px] text-center">W</div>
                    </div>
                </TaskSlot>
                <TaskSlot>
                    <svg width="30" height="32" viewBox="0 0 30 32" fill="none" stroke="#e0284a"><ellipse cx="15" cy="16" rx="13.500" ry="14.500" strokeWidth="2.500" /><ellipse cx="15" cy="16" rx="6.500" ry="12.500" strokeWidth="2" /></svg>
                </TaskSlot>
                <TaskSlot run>
                    <svg width="30" height="32" viewBox="0 0 30 32"><path d="M22 0 30 4v24l-8 4L8 19l-5 4-3-2V11l3-2 5 4Z" fill="#0a78c8" /><path d="M22 0 30 4v24l-8 4Z" fill="#2b9ee8" /><path d="M22 8v16L12 16Z" fill="#1b1b1b" /></svg>
                </TaskSlot>
                <TaskSlot run>
                    <div className="w-[27px] h-[27px] bg-black border-2 border-[#2f88e8] border-t-[#e0417f] text-white text-[12px] font-bold leading-[13px] pl-[3px] pt-[2px]">IJ<div className="w-[10px] h-[2px] bg-white mt-[5px]" /></div>
                </TaskSlot>
                <TaskSlot run>
                    <div className="w-[28px] h-[28px] rounded-[4px] bg-[#b30b00] flex items-center justify-center"><AcrobatGlyph /></div>
                </TaskSlot>
                <TaskSlot active run>
                    <div className="relative -mt-[1px]">
                        <ChromeLogo size={28} />
                        <div className="absolute -right-[6px] -bottom-[3px] w-[20px] h-[20px] rounded-full bg-[#44596d] text-[#d8dde2] text-[11px] font-semibold flex items-center justify-center">B</div>
                    </div>
                </TaskSlot>
                <TaskSlot run>
                    <svg width="28" height="30" viewBox="0 0 28 30"><path d="M6 2h16l4 22-16 5-8-4Z" fill="#cfe7ee" /><path d="M8 6h12M8 11h13M9 16h13" stroke="#7fb2bf" /><path d="M2 25l8 4 16-5-2 3-14 3Z" fill="#4d8fa0" /></svg>
                </TaskSlot>
                <TaskSlot run>
                    <div className="relative w-[30px] h-[30px]">
                        <div className="absolute inset-0 rounded-full bg-gradient-to-br from-[#ff8f6b] to-[#c43e1c]" />
                        <div className="absolute left-0 top-[7px] w-[16px] h-[16px] rounded-[2px] bg-[#c43e1c] text-white text-[12px] font-bold leading-[16px] text-center">P</div>
                    </div>
                </TaskSlot>
                {/* tray */}
                <div className="ml-[35px] relative w-[24px] h-[24px] rounded-full bg-[#f9c73a] shrink-0">
                    <svg width="18" height="12" viewBox="0 0 18 12" fill="#d5e9f7" className="absolute -right-[1px] bottom-[4px]"><path d="M4 12a4 4 0 0 1 0-8 5.500 5.500 0 0 1 10 1 3.500 3.500 0 0 1 0 7Z" /></svg>
                </div>
                <span className="ml-[12px] text-[18px] tracking-[-0.4px] w-[38px] whitespace-nowrap shrink-0">27°C</span>
                <svg width="16" height="9" viewBox="0 0 16 9" fill="none" stroke="#e5e5e5" strokeWidth="1.200" className="ml-[23px] shrink-0"><path d="M1 8l7-7 7 7" /></svg>
                <svg width="15" height="22" viewBox="0 0 15 22" fill="none" stroke="#d8d8d8" className="ml-[15px] shrink-0"><rect x="1" y="6" width="9" height="10" rx="1.500" /><path d="M10 9.500l4-2v7l-4-2M3 2h5M3 20h5" /></svg>
                <svg width="20" height="13" viewBox="0 0 20 13" fill="#dcdcdc" className="ml-[11px] shrink-0"><path d="M4 13a4 4 0 0 1-.5-8 6 6 0 0 1 11-1.500A4.500 4.500 0 0 1 16 13Z" /></svg>
                <div className="ml-[10px] relative w-[20px] h-[19px] border border-[#d8d8d8] shrink-0 -skew-y-6">
                    <RotateCw size={10} className="absolute left-[4px] top-[3px] text-[#d8d8d8]" />
                    <div className="absolute -right-[4px] -bottom-[4px] w-[9px] h-[9px] rounded-full bg-[#f98b06]" />
                </div>
                <svg width="20" height="13" viewBox="0 0 20 13" fill="none" stroke="#dcdcdc" className="ml-[10px] shrink-0"><path d="M7 2.500h11v9H7Z" /><path d="M19 5.500v3" /><path d="M0 4.500h5v2c0 2-1 3-2.500 3S0 8.500 0 6.500ZM3 9v4M1.500 1v3M3.500 1v3" fill="#dcdcdc" stroke="#dcdcdc" strokeWidth=".6" /></svg>
                <svg width="18" height="18" viewBox="0 0 18 18" fill="none" stroke="#dcdcdc" className="ml-[13px] shrink-0"><path d="M1 16A15 15 0 0 1 16 1M4.500 16A11 11 0 0 1 16 4.500M8 16a7.500 7.500 0 0 1 8-8" /><circle cx="14" cy="15.500" r="1.500" fill="#fff" stroke="none" /></svg>
                <svg width="20" height="18" viewBox="0 0 20 18" fill="none" stroke="#dcdcdc" className="ml-[10px] shrink-0"><path d="M1 6h3l5-5v16l-5-5H1ZM12 6c1 2 1 4 0 6M15 3c2 3 2 9 0 12" /></svg>
                <span className="ml-[15px] text-[14px] text-[#e8e8e8] w-[26px] shrink-0">FRA</span>
                <div className="ml-[16px] w-[76px] text-center text-[14px] leading-[22px] text-[#e8e8e8] shrink-0 tracking-[-0.2px] whitespace-nowrap">11:20 AM<br />20/05/2022</div>
                <div className="ml-[25px] relative w-[20px] h-[19px] bg-white shrink-0">
                    <div className="mx-[4px] mt-[4px] h-px bg-[#555]" />
                    <div className="mx-[4px] mt-[3px] h-px bg-[#555]" />
                    <div className="absolute left-[9px] top-[10px] w-[19px] h-[19px] rounded-full bg-[#2d2d2d] border border-[#999] text-[12px] font-semibold flex items-center justify-center">2</div>
                </div>
            </div>
        </div>
    )
}
